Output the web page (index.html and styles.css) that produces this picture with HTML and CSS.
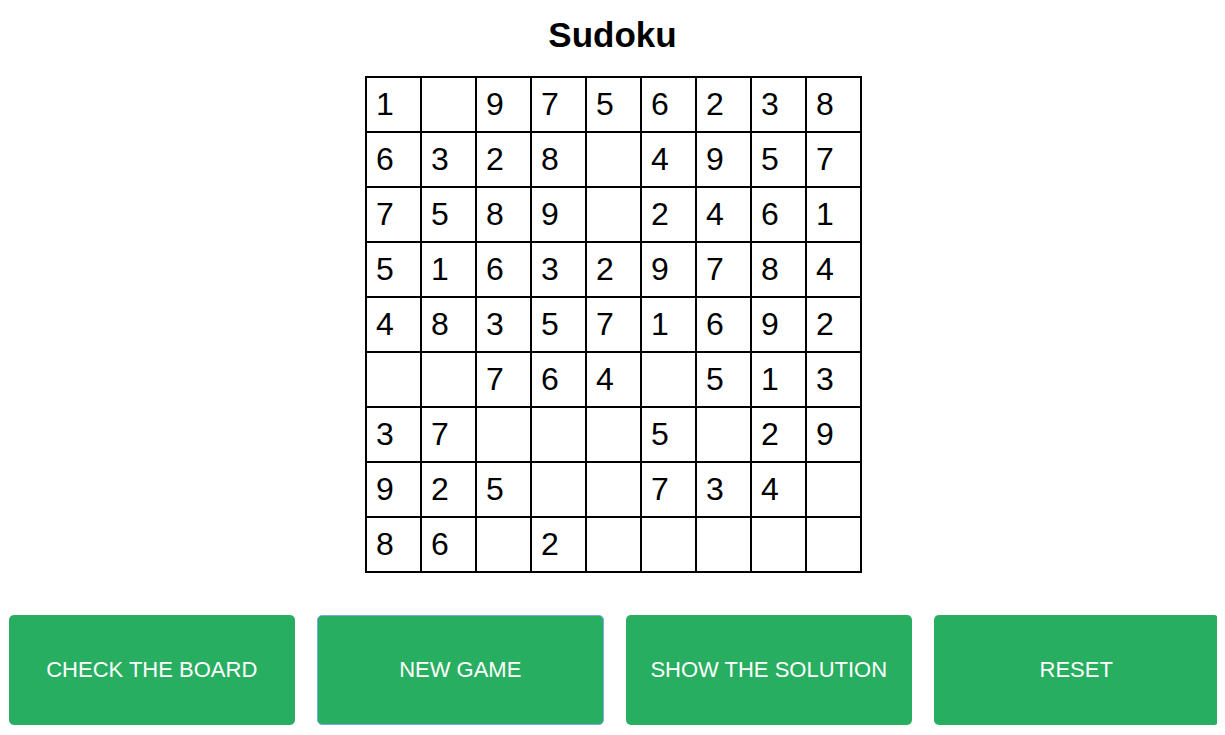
FILE: index.html
```html
<!DOCTYPE html>
<html>
<head>
<meta charset="utf-8">
<link rel="stylesheet" href="styles.css">
</head>
<body>
<h1 class="title">Sudoku</h1>
<div class="board">
<div class="cell">1</div><div class="cell"></div><div class="cell">9</div><div class="cell">7</div><div class="cell">5</div><div class="cell">6</div><div class="cell">2</div><div class="cell">3</div><div class="cell">8</div>
<div class="cell">6</div><div class="cell">3</div><div class="cell">2</div><div class="cell">8</div><div class="cell"></div><div class="cell">4</div><div class="cell">9</div><div class="cell">5</div><div class="cell">7</div>
<div class="cell">7</div><div class="cell">5</div><div class="cell">8</div><div class="cell">9</div><div class="cell"></div><div class="cell">2</div><div class="cell">4</div><div class="cell">6</div><div class="cell">1</div>
<div class="cell">5</div><div class="cell">1</div><div class="cell">6</div><div class="cell">3</div><div class="cell">2</div><div class="cell">9</div><div class="cell">7</div><div class="cell">8</div><div class="cell">4</div>
<div class="cell">4</div><div class="cell">8</div><div class="cell">3</div><div class="cell">5</div><div class="cell">7</div><div class="cell">1</div><div class="cell">6</div><div class="cell">9</div><div class="cell">2</div>
<div class="cell"></div><div class="cell"></div><div class="cell">7</div><div class="cell">6</div><div class="cell">4</div><div class="cell"></div><div class="cell">5</div><div class="cell">1</div><div class="cell">3</div>
<div class="cell">3</div><div class="cell">7</div><div class="cell"></div><div class="cell"></div><div class="cell"></div><div class="cell">5</div><div class="cell"></div><div class="cell">2</div><div class="cell">9</div>
<div class="cell">9</div><div class="cell">2</div><div class="cell">5</div><div class="cell"></div><div class="cell"></div><div class="cell">7</div><div class="cell">3</div><div class="cell">4</div><div class="cell"></div>
<div class="cell">8</div><div class="cell">6</div><div class="cell"></div><div class="cell">2</div><div class="cell"></div><div class="cell"></div><div class="cell"></div><div class="cell"></div><div class="cell"></div>
</div>
<div class="actions">
<button class="btn">CHECK THE BOARD</button>
<button class="btn btn-focus">NEW GAME</button>
<button class="btn">SHOW THE SOLUTION</button>
<button class="btn">RESET</button>
</div>
</body>
</html>
```
FILE: styles.css
```css
* { box-sizing: border-box; }
body {
  margin: 8px;
  font-family: "Liberation Sans", Arial, sans-serif;
  background: #fff;
  color: #000;
}
.title {
  font-size: 35px;
  font-weight: bold;
  text-align: center;
  margin: 7px 0 21px;
  line-height: 40px;
}
.board {
  display: grid;
  grid-template-columns: repeat(9, 55px);
  grid-template-rows: repeat(9, 55px);
  width: 497px;
  margin: 0 auto;
  border: 1px solid #000;
  transform: translateX(1px);
}
.cell {
  border: 1px solid #000;
  font-size: 32px;
  line-height: 53px;
  padding-left: 9px;
}
.actions {
  display: flex;
  gap: 22px;
  margin: 42px -2px 0 1px;
}
.btn {
  flex: 1;
  height: 110px;
  background: #27ae60;
  color: #fff;
  border: none;
  border-radius: 5px;
  font-family: "Liberation Sans", Arial, sans-serif;
  font-size: 22px;
  padding: 0;
}
.btn-focus {
  border: 1px solid #7aa6ec;
}
```
